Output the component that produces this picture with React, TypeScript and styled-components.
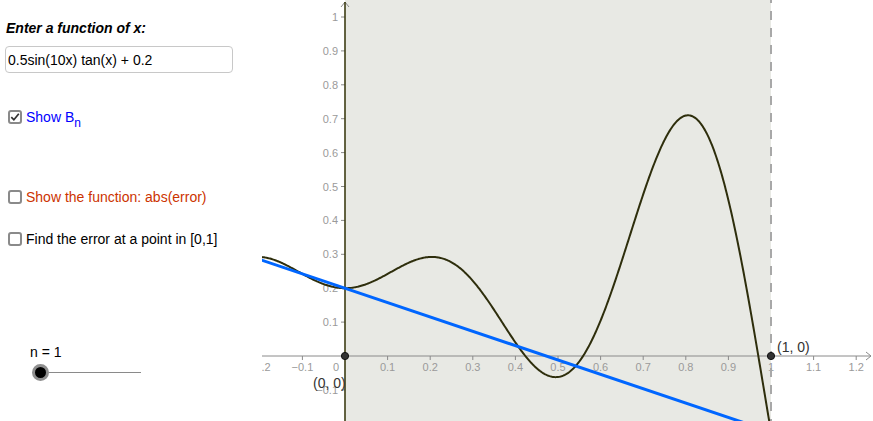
import styled, { createGlobalStyle } from "styled-components"

const GlobalStyle = createGlobalStyle`
    body {
        margin: 0;
        background: #ffffff;
        font-family: "Liberation Sans", Arial, sans-serif;
    }
`

// graph view geometry (svg coords, view starts at page x = 262)
const VIEW_W = 611
const VIEW_H = 421
const OX = 83
const OY = 356
const SX = 426
const SY = 339

const px = (x: number) => OX + x * SX
const py = (y: number) => OY - y * SY

const f = (x: number) => 0.5 * Math.sin(10 * x) * Math.tan(x) + 0.2
const f0 = f(0)
const f1 = f(1)
const bn = (x: number) => f0 * (1 - x) + f1 * x

function curvePath() {
    const pts: string[] = []
    for (let x = -0.2; x <= 1.0001; x += 0.002) {
        pts.push(`${px(x).toFixed(2)},${py(f(x)).toFixed(2)}`)
    }
    return "M" + pts.join(" L")
}

const xTicks = [-0.2, -0.1, 0.1, 0.2, 0.3, 0.4, 0.5, 0.6, 0.7, 0.8, 0.9, 1, 1.1, 1.2]
const yTicks = [-0.1, 0.1, 0.2, 0.3, 0.4, 0.5, 0.6, 0.7, 0.8, 0.9, 1]

const fmt = (v: number) => {
    const s = Number.isInteger(v) ? String(v) : v.toFixed(1)
    return s.replace("-", "\u2212")
}

function Checkbox({ checked }: { checked?: boolean }) {
    return (
        <Box>
            {checked && (
                <svg width="10" height="10" viewBox="0 0 10 10">
                    <path
                        d="M1.3 5.1 L3.9 7.8 L8.8 1.8"
                        fill="none"
                        stroke="#333"
                        strokeWidth="1.7"
                    />
                </svg>
            )}
        </Box>
    )
}

function Graph() {
    return (
        <GraphSvg width={VIEW_W} height={VIEW_H} viewBox={`0 0 ${VIEW_W} ${VIEW_H}`}>
            <rect x={px(0)} y={0} width={SX} height={VIEW_H} fill="#e8e9e4" />

            {/* x axis */}
            <line x1={0} y1={OY} x2={VIEW_W - 2} y2={OY} stroke="#8a8a8a" strokeWidth="1" />
            <path
                d={`M${VIEW_W - 7} ${OY - 4} L${VIEW_W - 2} ${OY} L${VIEW_W - 7} ${OY + 4}`}
                fill="none"
                stroke="#8a8a8a"
            />
            {xTicks.map((t) => (
                <g key={t}>
                    <line x1={px(t)} y1={OY} x2={px(t)} y2={OY + 4} stroke="#8a8a8a" />
                    <AxisLabel x={px(t)} y={OY + 15} textAnchor="middle">
                        {fmt(t)}
                    </AxisLabel>
                </g>
            ))}
            <AxisLabel x={OX - 6} y={OY + 15} textAnchor="end">
                0
            </AxisLabel>

            {/* y axis */}
            <path
                d={`M${OX - 4} ${7} L${OX} ${2} L${OX + 4} ${7}`}
                fill="none"
                stroke="#8a8a8a"
            />
            {yTicks.map((t) => (
                <g key={t}>
                    <line x1={OX - 4} y1={py(t)} x2={OX} y2={py(t)} stroke="#8a8a8a" />
                    <AxisLabel x={OX - 7} y={py(t) + 4} textAnchor="end">
                        {fmt(t)}
                    </AxisLabel>
                </g>
            ))}
            <line x1={OX} y1={2} x2={OX} y2={VIEW_H} stroke="#3d3d14" strokeWidth="1.6" />

            {/* x = 1 border */}
            <line
                x1={px(1)}
                y1={0}
                x2={px(1)}
                y2={VIEW_H}
                stroke="#a8a8a8"
                strokeWidth="2"
                strokeDasharray="9 8"
                strokeDashoffset="6"
            />

            <path d={curvePath()} fill="none" stroke="#2e2e0c" strokeWidth="2" />
            <line
                x1={px(-0.2)}
                y1={py(bn(-0.2))}
                x2={px(0.95)}
                y2={py(bn(0.95))}
                stroke="#0066ff"
                strokeWidth="3"
            />

            <circle cx={px(0)} cy={OY} r="3.6" fill="#333" stroke="#111" strokeWidth="1" />
            <circle cx={px(1)} cy={OY} r="3.6" fill="#333" stroke="#111" strokeWidth="1" />
            <PointLabel x={51} y={OY + 32}>
                (0, 0)
            </PointLabel>
            <PointLabel x={px(1) + 6} y={OY - 4}>
                (1, 0)
            </PointLabel>
        </GraphSvg>
    )
}

export default function App() {
    return (
        <>
            <GlobalStyle />
            <Applet>
                <Panel>
                    <Title>Enter a function of x:</Title>
                    <FunctionInput defaultValue="0.5sin(10x) tan(x) + 0.2" />
                    <CheckRow $top={34} $color="#0000ff">
                        <Checkbox checked />
                        <span>
                            Show B<Sub>n</Sub>
                        </span>
                    </CheckRow>
                    <CheckRow $top={60} $color="#cc3300">
                        <Checkbox />
                        <span>Show the function: abs(error)</span>
                    </CheckRow>
                    <CheckRow $top={22} $color="#000000">
                        <Checkbox />
                        <span>Find the error at a point in [0,1]</span>
                    </CheckRow>
                    <SliderLabel>n = 1</SliderLabel>
                    <Slider>
                        <Knob />
                        <Track />
                    </Slider>
                </Panel>
                <Graph />
            </Applet>
        </>
    )
}

const Applet = styled.div`
    width: 873px;
    height: 421px;
    display: flex;
    overflow: hidden;
    background: #ffffff;
`

const Panel = styled.div`
    width: 262px;
    flex-shrink: 0;
    display: flex;
    flex-direction: column;
    align-items: flex-start;
    padding: 20px 0 0 0;
    box-sizing: border-box;
`

const Title = styled.div`
    margin-left: 6px;
    font-size: 14px;
    line-height: 16px;
    font-weight: bold;
    font-style: italic;
    color: #000;
`

const FunctionInput = styled.input`
    margin: 10px 0 0 5px;
    width: 228px;
    height: 27px;
    box-sizing: border-box;
    padding: 0 2px;
    border: 1px solid #c8c8c8;
    border-radius: 4px;
    outline: none;
    font-family: "Liberation Sans", Arial, sans-serif;
    font-size: 14px;
    color: #000;
    background: #fff;
`

const CheckRow = styled.div<{ $top: number; $color: string }>`
    margin: ${({ $top }) => `${$top}px`} 0 0 8px;
    height: 20px;
    display: flex;
    align-items: center;
    gap: 4px;
    font-size: 14px;
    color: ${({ $color }) => $color};
    white-space: nowrap;
`

const Box = styled.span`
    width: 14px;
    height: 14px;
    box-sizing: border-box;
    border: 2px solid #8a8a8a;
    border-radius: 3px;
    background: #fff;
    display: flex;
    align-items: center;
    justify-content: center;
`

const Sub = styled.sub`
    font-size: 12px;
    vertical-align: -5px;
    line-height: 0;
`

const SliderLabel = styled.div`
    margin: 95px 0 0 30px;
    font-size: 14px;
    line-height: 16px;
    color: #000;
`

const Slider = styled.div`
    margin: 4px 0 0 32px;
    height: 16px;
    display: flex;
    align-items: center;
`

const Knob = styled.span`
    width: 11px;
    height: 11px;
    border-radius: 50%;
    background: #000;
    border: 3px solid #8f8f8f;
    flex-shrink: 0;
`

const Track = styled.span`
    width: 92px;
    height: 1px;
    background: #8a8a8a;
`

const GraphSvg = styled.svg`
    display: block;
    flex-shrink: 0;
`

const AxisLabel = styled.text`
    font-family: "Liberation Sans", Arial, sans-serif;
    font-size: 11px;
    fill: #9a9a9a;
`

const PointLabel = styled.text`
    font-family: "Liberation Sans", Arial, sans-serif;
    font-size: 14px;
    fill: #333;
`
